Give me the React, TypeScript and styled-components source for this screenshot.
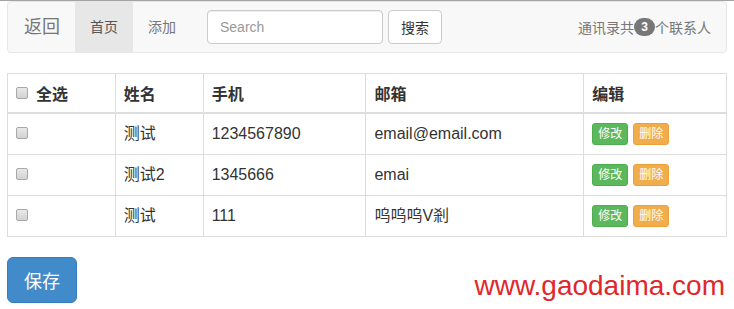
import styled, { createGlobalStyle } from "styled-components";

const GlobalStyle = createGlobalStyle`
  html, body {
    margin: 0;
    padding: 0;
    background: #fff;
  }
  body {
    border-top: 1px solid #a3a3a3;
    font-family: "Liberation Sans", "Noto Sans CJK SC", sans-serif;
    font-size: 14px;
    color: #333;
  }
`;

const Page = styled.div`
  padding: 0 7px;
`;

const Navbar = styled.nav`
  display: flex;
  align-items: center;
  height: 50px;
  background: #f8f8f8;
  border: 1px solid #e7e7e7;
  border-radius: 4px;
  margin-bottom: 20px;
`;

const Brand = styled.a`
  padding: 0 15px 0 16px;
  font-size: 18px;
  line-height: 50px;
  color: #777;
`;

const NavLink = styled.a<{ $active?: boolean }>`
  padding: 0 15px;
  line-height: 50px;
  font-size: 14px;
  color: ${({ $active }) => ($active ? "#555" : "#777")};
  background: ${({ $active }) => ($active ? "#e7e7e7" : "transparent")};
`;

const SearchForm = styled.form`
  display: flex;
  gap: 5px;
  margin-left: 16px;
`;

const SearchInput = styled.input`
  box-sizing: border-box;
  width: 176px;
  height: 34px;
  padding: 6px 12px;
  font-family: inherit;
  font-size: 14px;
  color: #555;
  border: 1px solid #ccc;
  border-radius: 4px;
  box-shadow: inset 0 1px 1px rgba(0, 0, 0, 0.075);
  outline: none;
  &::placeholder {
    color: #999;
  }
`;

const DefaultButton = styled.button`
  box-sizing: border-box;
  height: 34px;
  padding: 0 12px;
  font-family: inherit;
  font-size: 14px;
  color: #333;
  background: #fff;
  border: 1px solid #ccc;
  border-radius: 4px;
`;

const NavText = styled.p`
  margin: 0 15px 0 auto;
  color: #777;
  font-size: 14px;
  display: flex;
  align-items: center;
`;

const Badge = styled.span`
  display: inline-block;
  box-sizing: border-box;
  min-width: 21px;
  height: 18px;
  padding: 0 6px;
  font-size: 12px;
  font-weight: bold;
  line-height: 18px;
  color: #fff;
  background: #777;
  border-radius: 10px;
  text-align: center;
`;

const Table = styled.table`
  width: 100%;
  border-collapse: collapse;
  border: 1px solid #ddd;
  font-size: 16px;
  margin-bottom: 20px;
`;

const Th = styled.th<{ $w: number }>`
  width: ${({ $w }) => $w}px;
  box-sizing: border-box;
  height: 39px;
  padding: 0 8px;
  text-align: left;
  font-weight: bold;
  color: #333;
  border: 1px solid #ddd;
  border-bottom: 2px solid #ddd;
  vertical-align: middle;
`;

const Td = styled.td`
  padding: 8px;
  line-height: 24px;
  border: 1px solid #ddd;
  vertical-align: top;
  color: #333;
`;

const Check = styled.input.attrs({ type: "checkbox" })`
  appearance: none;
  width: 12px;
  height: 12px;
  margin: 0;
  border: 1px solid #a9a9a9;
  border-radius: 2px;
  background: linear-gradient(#e9e9e9, #d2d2d2);
  vertical-align: middle;
`;

const HeadLabel = styled.span`
  display: inline-flex;
  align-items: center;
  gap: 8px;
`;

const RowCheck = styled(Check)`
  margin-top: 5px;
  vertical-align: top;
`;

const Actions = styled.div`
  display: flex;
  gap: 5px;
  padding-top: 1px;
`;

const XsButton = styled.button<{ $kind: "success" | "warning" }>`
  box-sizing: border-box;
  height: 22px;
  padding: 0 5px;
  font-family: inherit;
  font-size: 12px;
  line-height: 20px;
  color: #fff;
  border-radius: 3px;
  background: ${({ $kind }) => ($kind === "success" ? "#5cb85c" : "#f0ad4e")};
  border: 1px solid ${({ $kind }) => ($kind === "success" ? "#4cae4c" : "#eea236")};
`;

const Footer = styled.div`
  display: flex;
  justify-content: space-between;
  align-items: flex-end;
`;

const SaveButton = styled.button`
  box-sizing: border-box;
  height: 46px;
  padding: 0 16px;
  font-family: inherit;
  font-size: 18px;
  color: #fff;
  background: #428bca;
  border: 1px solid #357ebd;
  border-radius: 6px;
`;

const Watermark = styled.span`
  font-family: "Liberation Sans", sans-serif;
  font-size: 28px;
  line-height: 1;
  color: #e0282c;
  margin-right: 2px;
  margin-bottom: 3px;
`;

const contacts = [
  { name: "测试", phone: "1234567890", email: "email@email.com" },
  { name: "测试2", phone: "1345666", email: "emai" },
  { name: "测试", phone: "111", email: "呜呜呜V剎" },
];

export default function App() {
  return (
    <Page>
      <GlobalStyle />
      <Navbar>
        <Brand>返回</Brand>
        <NavLink $active>首页</NavLink>
        <NavLink>添加</NavLink>
        <SearchForm onSubmit={(e) => e.preventDefault()}>
          <SearchInput placeholder="Search" />
          <DefaultButton type="submit">搜索</DefaultButton>
        </SearchForm>
        <NavText>
          通讯录共<Badge>{contacts.length}</Badge>个联系人
        </NavText>
      </Navbar>
      <Table>
        <thead>
          <tr>
            <Th $w={108}>
              <HeadLabel>
                <Check />
                全选
              </HeadLabel>
            </Th>
            <Th $w={88}>姓名</Th>
            <Th $w={163}>手机</Th>
            <Th $w={218}>邮箱</Th>
            <Th $w={143}>编辑</Th>
          </tr>
        </thead>
        <tbody>
          {contacts.map((c, i) => (
            <tr key={i}>
              <Td>
                <RowCheck />
              </Td>
              <Td>{c.name}</Td>
              <Td>{c.phone}</Td>
              <Td>{c.email}</Td>
              <Td>
                <Actions>
                  <XsButton $kind="success">修改</XsButton>
                  <XsButton $kind="warning">删除</XsButton>
                </Actions>
              </Td>
            </tr>
          ))}
        </tbody>
      </Table>
      <Footer>
        <SaveButton>保存</SaveButton>
        <Watermark>www.gaodaima.com</Watermark>
      </Footer>
    </Page>
  );
}
